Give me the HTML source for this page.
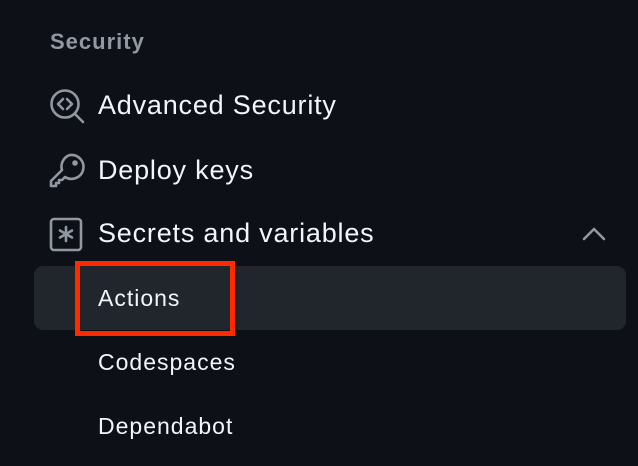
<!DOCTYPE html>
<html><head><style>
html,body{margin:0;padding:0;background:#0d1117;width:638px;height:466px;overflow:hidden;font-family:"Liberation Sans",sans-serif;}
.t{position:absolute;white-space:nowrap;}
.h{left:50px;top:29px;font-size:22px;font-weight:bold;color:#9198a1;letter-spacing:1px;}
.i{left:98px;font-size:27px;color:#f0f6fc;letter-spacing:0.8px;}
.s{left:98px;font-size:23px;color:#f0f6fc;letter-spacing:1px;}
svg{position:absolute;}
</style></head><body>
<div class="t h">Security</div>
<svg style="left:48px;top:88px" width="38" height="38" viewBox="0 0 38 38" fill="none" stroke="#9198a1" stroke-width="2.6" stroke-linecap="round" stroke-linejoin="round">
<circle cx="17" cy="16" r="13.5"/><path d="M27 26l8 8"/><path d="M15 11l-5 5 5 5M19 11l5 5-5 5"/></svg>
<div class="t i" style="top:90px">Advanced Security</div>
<svg style="left:48px;top:152px" width="38" height="38" viewBox="0 0 38 38" fill="none" stroke="#9198a1" stroke-width="2.6" stroke-linecap="round" stroke-linejoin="round">
<path d="M22 3a12 12 0 1 1-5 22l-3 3h-3v3h-3v3H3v-5l11-11a12 12 0 0 1 8-15z"/><circle cx="27" cy="11" r="1.5" fill="#9198a1"/></svg>
<div class="t i" style="top:155px">Deploy keys</div>
<svg style="left:48px;top:216px" width="38" height="38" viewBox="0 0 38 38" fill="none" stroke="#9198a1" stroke-width="2.6" stroke-linecap="round" stroke-linejoin="round">
<rect x="3" y="3" width="30" height="31" rx="3"/><path d="M18 11v14M12 14.5l12 7M24 14.5l-12 7"/></svg>
<div class="t i" style="top:218px">Secrets and variables</div>
<svg style="left:580px;top:224px" width="28" height="20" viewBox="0 0 28 20" fill="none" stroke="#9198a1" stroke-width="2.6" stroke-linecap="round" stroke-linejoin="round"><path d="M4 15l10-10 10 10"/></svg>
<div style="position:absolute;left:34px;top:266px;width:592px;height:64px;background:#21262d;border-radius:9px"></div>
<div style="position:absolute;left:75px;top:261px;width:150px;height:65px;border:5px solid #ff2a00"></div>
<div class="t s" style="top:285px">Actions</div>
<div class="t s" style="top:349px">Codespaces</div>
<div class="t s" style="top:413px">Dependabot</div>
</body></html>
